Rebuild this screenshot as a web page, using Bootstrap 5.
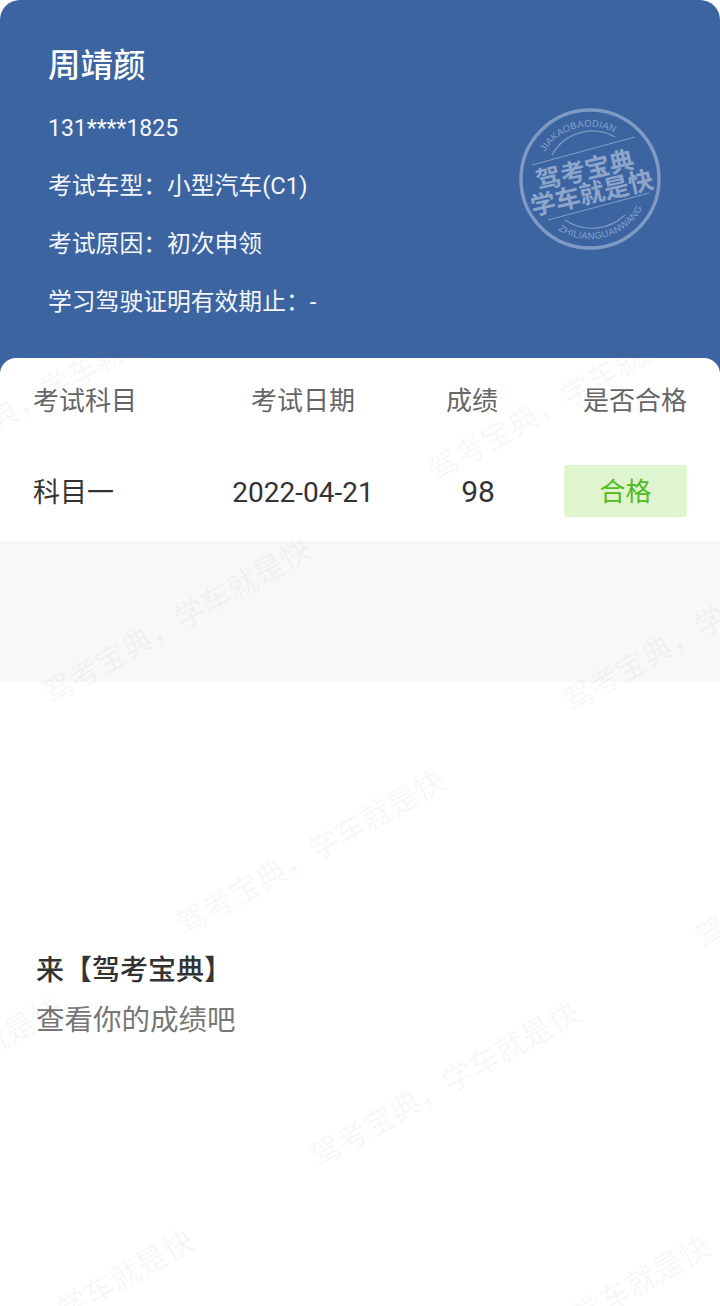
<!DOCTYPE html>
<html lang="zh-CN">
<head>
  <meta charset="UTF-8" />
  <meta name="viewport" content="width=device-width, initial-scale=1.0"/>
  <title>成绩单</title>
  <link href="https://cdn.jsdelivr.net/npm/bootstrap@5.3.3/dist/css/bootstrap.min.css" rel="stylesheet"/>
  <style>
    html, body { height: 100%; }
    body {
      font-family: Roboto, "Noto Sans CJK SC", sans-serif;
      background: #fff;
      overflow: hidden;
    }
    .page-wrap { height: 1306px; overflow: hidden; }

    /* header */
    .info-head {
      height: 378px;
      padding: 46px 48px 0;
      background: #3b64a1;
      border-radius: 20px 20px 0 0;
      color: #f4f6fa;
    }
    .info-name { height: 40px; font-size: 32.5px; line-height: 40px; font-weight: 500; color: #fff; margin-bottom: 24px; }
    .info-line { height: 38px; font-size: 23.8px; line-height: 38px; margin-bottom: 20px; }
    .info-phone { font-size: 23px; margin-bottom: 19px; }
    .stamp-mark { position: absolute; left: 514px; top: 103px; width: 152px; height: 152px; }

    /* watermark layer starts where the white card starts */
    .wm-layer {
      position: absolute;
      left: 0;
      right: 0;
      top: 358px;
      bottom: 0;
      overflow: hidden;
      pointer-events: none;
      z-index: 3;
    }
    .wm-text {
      position: absolute;
      width: 340px;
      margin: -20px 0 0 -170px;
      text-align: center;
      font-size: 30.3px;
      line-height: 40px;
      color: rgba(0,0,0,.052);
      white-space: nowrap;
      transform: rotate(-29.5deg);
    }

    /* results */
    .result-card {
      margin-top: -20px;
      border-radius: 16px 16px 0 0;
      height: 183px;
      padding: 0 33px;
    }
    .result-row { display: grid; grid-template-columns: 185px 170px 168px 1fr; align-items: center; }
    .result-head { height: 86px; font-size: 26px; color: #666; }
    .result-body { height: 52px; font-size: 27px; color: #333; margin-top: 21px; }
    .cell-text { padding-top: 4px; }
    .cell-mid { text-align: center; }
    .cell-date { font-size: 28px; }
    .cell-score { font-size: 30px; padding-left: 12px; }
    .pass-tag {
      height: 52px;
      margin-left: 8px;
      background: #dff5cf;
      border-radius: 4px;
      color: #52bb22;
      font-size: 26px;
      line-height: 54px;
      text-align: center;
    }
    .grey-band { height: 141px; background: #f8f8f8; }

    .promo-box { padding: 266px 36px 0; }
    .promo-title { font-size: 28px; line-height: 46px; font-weight: 500; color: #333; }
    .promo-sub { font-size: 28.5px; line-height: 54px; color: #777; }
  </style>
</head>
<body>
  <div class="page-wrap position-relative">
    <!-- Header -->
    <div class="info-head position-relative">
      <div class="info-name">周靖颜</div>
      <div class="info-line info-phone">131****1825</div>
      <div class="info-line">考试车型：小型汽车(C1)</div>
      <div class="info-line">考试原因：初次申领</div>
      <div class="info-line">学习驾驶证明有效期止：-</div>

      <svg class="stamp-mark" viewBox="0 0 152 152" fill="none" stroke="#7f9ac4">
        <defs>
          <path id="arcTop" d="M31 49 A52 52 0 0 1 104 32"/>
          <path id="arcBot" d="M44 127 A60 60 0 0 0 129 104"/>
        </defs>
        <circle cx="76" cy="76" r="69" stroke-width="3.4"/>
        <path d="M38 52 A46 46 0 0 1 101 34" stroke-width="1.2"/>
        <path d="M51 117 A48 48 0 0 0 111 112" stroke-width="1.2"/>
        <path d="M18 62 L121 34 M34 117 L135 90" stroke-width="1.2"/>
        <g fill="#88a0c8" stroke="none" font-family="'Liberation Sans', sans-serif" font-size="9.5">
          <text letter-spacing=".2"><textPath href="#arcTop">JIAKAOBAODIAN</textPath></text>
          <text letter-spacing=".3"><textPath href="#arcBot">ZHILIANGUANWANG</textPath></text>
        </g>
        <g fill="#8da5cb" stroke="none" font-family="'Noto Sans CJK SC', sans-serif" font-weight="700" font-size="25" text-anchor="middle">
          <text x="71" y="76" transform="rotate(-13 71 67)">驾考宝典</text>
          <text x="78" y="99" transform="rotate(-13 78 90)">学车就是快</text>
        </g>
      </svg>
    </div>

    <!-- Results -->
    <div class="result-card bg-white position-relative">
      <div class="result-row result-head">
        <div>考试科目</div>
        <div class="cell-mid">考试日期</div>
        <div class="cell-mid">成绩</div>
        <div class="text-end">是否合格</div>
      </div>
      <div class="result-row result-body">
        <div class="cell-text">科目一</div>
        <div class="cell-mid cell-date cell-text">2022-04-21</div>
        <div class="cell-mid cell-score">98</div>
        <div class="pass-tag">合格</div>
      </div>
    </div>
    <div class="grey-band position-relative"></div>

    <!-- Promo -->
    <div class="promo-box position-relative">
      <div class="promo-title">来【驾考宝典】</div>
      <div class="promo-sub">查看你的成绩吧</div>
    </div>

    <div class="wm-layer">
      <span class="wm-text" style="left:43px;top:36px">驾考宝典，学车就是快</span>
      <span class="wm-text" style="left:563px;top:41px">驾考宝典，学车就是快</span>
      <span class="wm-text" style="left:177px;top:264px">驾考宝典，学车就是快</span>
      <span class="wm-text" style="left:697px;top:272px">驾考宝典，学车就是快</span>
      <span class="wm-text" style="left:311px;top:495px">驾考宝典，学车就是快</span>
      <span class="wm-text" style="left:830px;top:508px">驾考宝典，学车就是快</span>
      <span class="wm-text" style="left:-72px;top:722px">驾考宝典，学车就是快</span>
      <span class="wm-text" style="left:445px;top:727px">驾考宝典，学车就是快</span>
      <span class="wm-text" style="left:60px;top:955px">驾考宝典，学车就是快</span>
      <span class="wm-text" style="left:576px;top:961px">驾考宝典，学车就是快</span>
    </div>
  </div>

  <script src="https://cdn.jsdelivr.net/npm/bootstrap@5.3.3/dist/js/bootstrap.bundle.min.js"></script>
</body>
</html>
